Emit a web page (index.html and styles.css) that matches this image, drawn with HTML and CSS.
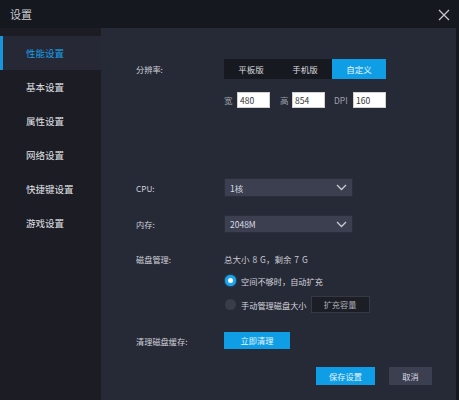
FILE: index.html
```html
<!DOCTYPE html>
<html lang="zh">
<head>
<meta charset="utf-8">
<link rel="stylesheet" href="styles.css">
</head>
<body>
<div class="window">
  <div class="titlebar">
    <span class="title">设置</span>
    <svg class="close" width="12" height="12" viewBox="0 0 12 12"><path d="M1 1L11 11M11 1L1 11" stroke="#c4c6cc" stroke-width="1.3" fill="none"/></svg>
  </div>
  <div class="main">
    <nav class="sidebar">
      <div class="nav-item active">性能设置</div>
      <div class="nav-item">基本设置</div>
      <div class="nav-item">属性设置</div>
      <div class="nav-item">网络设置</div>
      <div class="nav-item">快捷键设置</div>
      <div class="nav-item">游戏设置</div>
    </nav>
    <section class="content">
      <div class="row row-res">
        <span class="label">分辨率:</span>
        <div class="segmented">
          <span class="seg">平板版</span>
          <span class="seg">手机版</span>
          <span class="seg seg-on">自定义</span>
        </div>
      </div>
      <div class="row row-dim">
        <span class="label"></span>
        <div class="dims">
          <span class="dim-label">宽</span><span class="field">480</span>
          <span class="dim-label dl2">高</span><span class="field">854</span>
          <span class="dim-label dl3">DPI</span><span class="field">160</span>
        </div>
      </div>
      <div class="row row-cpu">
        <span class="label">CPU:</span>
        <div class="select"><span>1核</span><svg width="11" height="7" viewBox="0 0 11 7"><path d="M1 1L5.5 5.5L10 1" stroke="#c9cbd2" stroke-width="1.3" fill="none"/></svg></div>
      </div>
      <div class="row row-mem">
        <span class="label">内存:</span>
        <div class="select"><span>2048M</span><svg width="11" height="7" viewBox="0 0 11 7"><path d="M1 1L5.5 5.5L10 1" stroke="#c9cbd2" stroke-width="1.3" fill="none"/></svg></div>
      </div>
      <div class="row row-disk">
        <span class="label">磁盘管理:</span>
        <span class="info">总大小 8 G，剩余 7 G</span>
      </div>
      <div class="row row-r1">
        <span class="label"></span>
        <span class="radio radio-on"></span>
        <span class="radio-text">空间不够时，自动扩充</span>
      </div>
      <div class="row row-r2">
        <span class="label"></span>
        <span class="radio"></span>
        <span class="radio-text">手动管理磁盘大小</span>
        <span class="btn-dark">扩充容量</span>
      </div>
      <div class="row row-clean">
        <span class="label">清理磁盘缓存:</span>
        <span class="btn-blue btn-clean">立即清理</span>
      </div>
      <div class="footer">
        <span class="btn-blue btn-save">保存设置</span>
        <span class="btn-gray">取消</span>
      </div>
    </section>
  </div>
</div>
</body>
</html>
```
FILE: styles.css
```css
* { box-sizing: border-box; }
html, body { margin: 0; padding: 0; }
body {
  width: 459px;
  height: 400px;
  overflow: hidden;
  background: #15171d;
  font-family: "Noto Sans CJK SC", "Noto Sans", "Liberation Sans", sans-serif;
  font-size: 8.2px;
  color: #d2d4da;
}
.window { display: flex; flex-direction: column; width: 459px; height: 400px; }
.titlebar {
  height: 28px;
  flex: none;
  background: #16181f;
  display: flex;
  align-items: center;
  justify-content: space-between;
  padding: 0 8px 0 10px;
}
.title { font-size: 11px; color: #c9cbd1; }
.close { display: block; margin-right: 1px; margin-top: 1px; }
.main { flex: 1; display: flex; }
.sidebar {
  width: 101px;
  background: #1b1c24;
  padding-top: 8px;
}
.nav-item {
  height: 34px;
  line-height: 34px;
  padding-left: 26px;
  font-size: 9.5px;
  color: #e2e3e7;
}
.nav-item.active {
  background: #262935;
  color: #1a9ee4;
  border-left: 3px solid #1896dc;
  padding-left: 23px;
}
.content {
  flex: 1;
  background: #262936;
  border-right: 3px solid #16181e;
  padding-left: 35px;
  padding-right: 24px;
  display: flex;
  flex-direction: column;
}
.row { display: flex; align-items: center; }
.label { width: 88px; flex: none; color: #d0d2d8; }
.row-res { margin-top: 31px; height: 20px; }
.segmented { display: flex; background: #171920; height: 20px; }
.seg {
  width: 54px; height: 20px; line-height: 20px;
  text-align: center; color: #d8dade; font-size: 8.5px;
}
.seg-on { background: #0f9ee6; color: #eaf6fd; }
.row-dim { margin-top: 13px; height: 16px; }
.dims { display: flex; align-items: center; }
.dim-label { color: #9fa2ab; width: 13px; font-size: 8.5px; }
.dl2 { margin-left: 10px; width: 12px; }
.dl3 { margin-left: 9px; width: 19px; }
.field {
  width: 33px;
  height: 16px; line-height: 14px;
  background: #ffffff; color: #333;
  padding-left: 2px; font-size: 8.5px;
  border: 1px solid #d0d0d0;
}
.row-cpu { margin-top: 70px; height: 19px; }
.row-mem { margin-top: 18px; height: 18px; }
.select {
  width: 129px; height: 100%;
  background: #3b3f50;
  border: 1px solid #2c2f3b;
  display: flex; align-items: center; justify-content: space-between;
  padding: 0 5px;
  color: #d8dae0; font-size: 8.5px;
}
.row-disk { margin-top: 19px; height: 14px; }
.info { color: #c9cbd1; font-size: 8.5px; word-spacing: 1px; }
.row-r1 { margin-top: 8px; height: 13px; }
.row-r2 { margin-top: 9px; height: 17px; }
.radio {
  width: 11px; height: 11px; border-radius: 50%;
  background: #3a3c49; flex: none; margin-left: 1px;
}
.radio-on {
  background: #ffffff;
  border: 3px solid #1aa5ee;
  box-shadow: 0 0 2px #1aa5ee;
}
.radio-text { margin-left: 5px; color: #d4d6dc; }
.btn-dark {
  margin-left: 4px;
  width: 59px; height: 17px; line-height: 15px;
  background: #1c1e26; border: 1px solid #353845;
  text-align: center; color: #a9acb4;
}
.row-clean { margin-top: 19px; height: 17px; }
.btn-blue {
  background: #0f9ee6; color: #e8f5fd;
  text-align: center;
}
.btn-clean { width: 66px; height: 17px; line-height: 17px; }
.footer {
  margin-top: 18px; height: 18px;
  display: flex; justify-content: flex-end;
}
.btn-save { width: 59px; height: 18px; line-height: 18px; }
.btn-gray {
  margin-left: 14px;
  width: 43px; height: 18px; line-height: 18px;
  background: #3b3f50; color: #d8dae0;
  text-align: center;
}
```
